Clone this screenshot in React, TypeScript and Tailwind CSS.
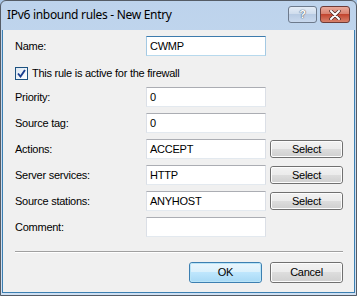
import React from "react";

const body = { fontFamily: '"Liberation Sans", Arial, sans-serif' };

function TextBox({ value, focused }: { value: string; focused?: boolean }) {
  return (
    <div
      className={
        "w-[120px] h-[20px] bg-white border flex items-center pl-[3px] text-[11px] tracking-[-0.25px] text-black " +
        (focused
          ? "border-t-[#3d7bad] border-x-[#a4c9e3] border-b-[#b7d9ed]"
          : "border-t-[#abadb3] border-x-[#dbdfe6] border-b-[#e3e9ef]")
      }
    >
      {value}
    </div>
  );
}

function Btn({ label, def, w = 73, h = 18 }: { label: string; def?: boolean; w?: number; h?: number }) {
  return (
    <div
      className={
        "relative rounded-[3px] border flex items-center justify-center text-[11px] tracking-[-0.25px] text-black " +
        (def
          ? "border-[#3c7fb1] bg-[linear-gradient(#eaf6fd_0%,#d9f0fc_50%,#bee6fd_50%,#a7d9f5_100%)]"
          : "border-[#707070] bg-[linear-gradient(#f2f2f2_0%,#ebebeb_50%,#dddddd_50%,#cfcfcf_100%)]")
      }
      style={{ width: w, height: h }}
    >
      <div className={"absolute inset-0 rounded-[2px] border " + (def ? "border-[#b9e4f7]" : "border-[#fcfcfc]")} />
      <span className="relative">{label}</span>
    </div>
  );
}

function Row({ label, value, select }: { label: string; value: string; select?: boolean }) {
  return (
    <div className="flex items-center h-[20px]">
      <div className="w-[131px] text-[11px] tracking-[-0.25px] text-black">{label}</div>
      <TextBox value={value} />
      {select && (
        <div className="ml-[4px]">
          <Btn label="Select" w={73} h={18} />
        </div>
      )}
    </div>
  );
}

export default function App() {
  return (
    <div className="w-[357px] h-[296px] overflow-hidden bg-[#a9c6e6]" style={body}>
      <div className="relative w-full h-full rounded-t-[6px] border border-[#555c66] bg-[linear-gradient(#bdd3ec,#c9dcf0_60%,#cfe0f3)] flex flex-col">
        {/* title bar */}
        <div className="h-[29px] flex items-start relative">
          <div
            className="pl-[6px] pt-[5px] text-[12px] tracking-[-0.3px] text-black"
            style={{ fontFamily: '"Noto Sans", "Open Sans", sans-serif' }}
          >
            IPv6 inbound rules - New Entry
          </div>
          <div className="absolute top-[5px] left-[287px] flex gap-[3px]">
            <div className="w-[29px] h-[17px] rounded-[3px] border border-[#6d7a8c] bg-[linear-gradient(#e4ecf6,#cddbec_50%,#b8cbe3_50%,#c9d9ee)] flex items-center justify-center">
              <span className="text-[11px] font-bold text-white leading-none" style={{ textShadow: "0 0 1px #3b4a60, 0 0 1px #3b4a60" }}>?</span>
            </div>
            <div className="w-[30px] h-[17px] rounded-[3px] border border-[#6e3b37] bg-[linear-gradient(#e9a99a,#d67e6c_50%,#c2452f_50%,#d8826c)] flex items-center justify-center">
              <svg width="12" height="10" viewBox="0 0 12 10">
                <path d="M2 1 L10 9 M10 1 L2 9" stroke="#4a2a26" strokeWidth="3.4" strokeLinecap="round" />
                <path d="M2 1 L10 9 M10 1 L2 9" stroke="#ffffff" strokeWidth="2" strokeLinecap="round" />
              </svg>
            </div>
          </div>
        </div>
        {/* client */}
        <div className="flex-1 mx-[1px] mb-[2px] border-l border-r border-b border-[#3c7fb1] bg-[#f0f0f0] relative">
          <div className="pl-[12px] pt-[6px] flex flex-col">
            <div className="flex items-center h-[20px]">
              <div className="w-[131px] text-[11px] tracking-[-0.25px] text-black">Name:</div>
              <TextBox value="CWMP" focused />
            </div>
            <div className="flex items-center h-[13px] mt-[11px] mb-[7px]">
              <div className="w-[13px] h-[13px] border border-[#1c5180] bg-[linear-gradient(135deg,#dce7f2,#ffffff)] flex items-center justify-center">
                <svg width="9" height="9" viewBox="0 0 9 9">
                  <path d="M1 4.5 L3.5 7.5 L8 1" fill="none" stroke="#1b3e8f" strokeWidth="1.9" />
                </svg>
              </div>
              <span className="ml-[4px] text-[11px] tracking-[-0.25px] text-black">This rule is active for the firewall</span>
            </div>
            <div className="flex flex-col gap-[6px]">
              <Row label="Priority:" value="0" />
              <Row label="Source tag:" value="0" />
              <Row label="Actions:" value="ACCEPT" select />
              <Row label="Server services:" value="HTTP" select />
              <Row label="Source stations:" value="ANYHOST" select />
              <Row label="Comment:" value="" />
            </div>
            <div className="mt-[14px] w-[328px] h-[2px] border-t border-[#a0a0a0] border-b border-b-white" />
            <div className="flex justify-end gap-[8px] w-[328px] mt-[9px]">
              <Btn label="OK" def w={73} h={21} />
              <Btn label="Cancel" w={73} h={21} />
            </div>
          </div>
        </div>
      </div>
    </div>
  );
}
